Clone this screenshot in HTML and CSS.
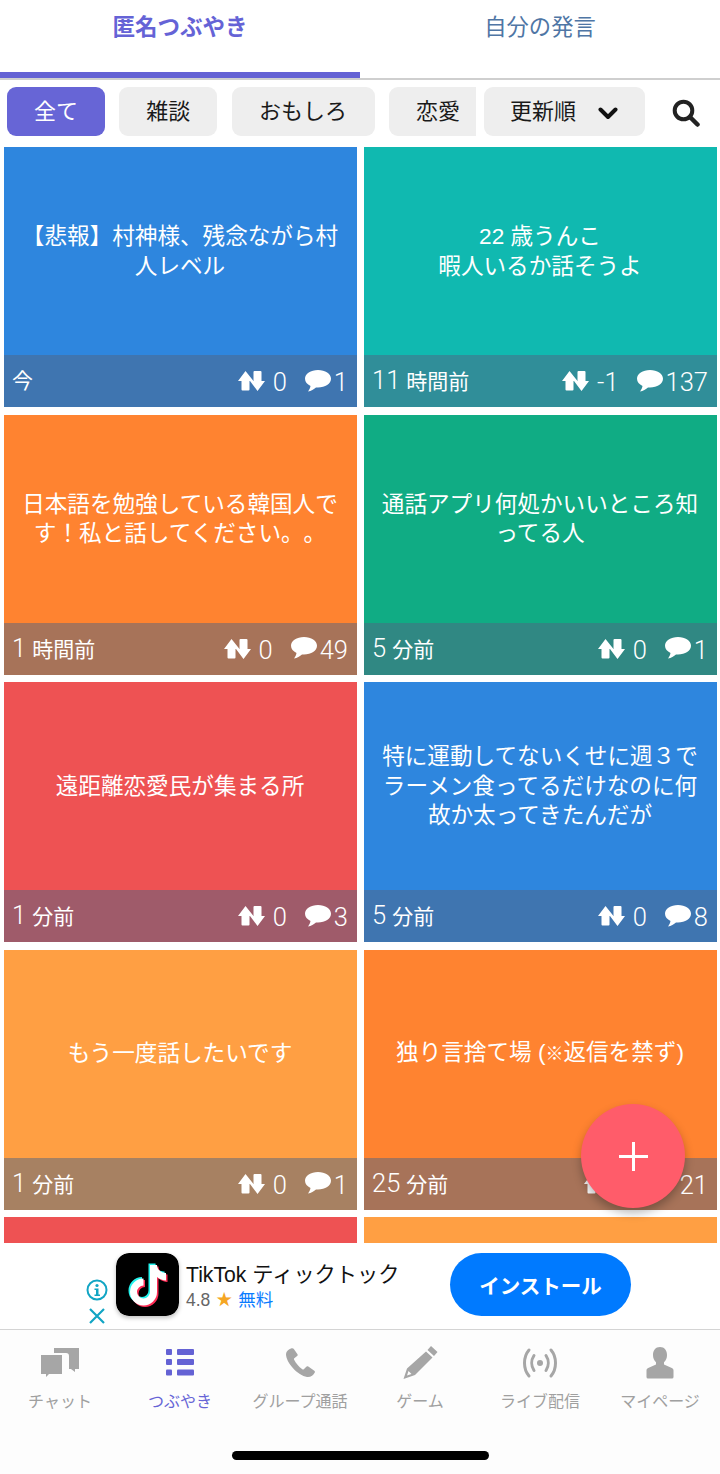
FILE: index.html
```html
<!DOCTYPE html>
<html lang="ja">
<head>
<meta charset="utf-8">
<title>匿名つぶやき</title>
<link rel="stylesheet" href="styles.css">
</head>
<body>
<svg class="defs" aria-hidden="true">
  <symbol id="vote" viewBox="0 0 27 20"><path d="M7.500 0 15.500 10h-4v8.500a1 1 0 0 1-1 1h-6a1 1 0 0 1-1-1V10H0z"/><path d="M16.500 0h6a1 1 0 0 1 1 1v9H27L19.500 20 12 10h3.500V1a1 1 0 0 1 1-1z"/></symbol>
  <symbol id="bubble" viewBox="0 0 26 23"><path d="M13 0C5.800 0 0 3.900 0 8.800c0 3 2.200 5.600 5.500 7.200-.3 2-1.300 4-2.500 5.500 3-.5 6-2.100 8-4 .7.100 1.300.1 2 .1 7.200 0 13-3.900 13-8.800S20.200 0 13 0z"/></symbol>
</svg>
<div class="page">
  <header class="tabs">
    <div class="tab tab-active">匿名つぶやき</div>
    <div class="tab">自分の発言</div>
  </header>
  <section class="filters">
    <div class="chips">
      <span class="chip chip-active">全て</span>
      <span class="chip">雑談</span>
      <span class="chip chip-wide">おもしろ</span>
      <span class="chip">恋愛</span>
    </div>
    <div class="sort">更新順
      <svg class="chev" viewBox="0 0 20 14"><path d="M2.500 3.500 10 11l7.500-7.500" fill="none" stroke="#111" stroke-width="4" stroke-linecap="round" stroke-linejoin="round"/></svg>
    </div>
    <svg class="search" viewBox="0 0 28 28"><circle cx="11.500" cy="11.500" r="8.800" fill="none" stroke="#222" stroke-width="4"/><path d="m18 18 7.500 7.500" stroke="#222" stroke-width="4.500" stroke-linecap="round"/></svg>
  </section>
  <main class="grid">
    <article class="card blue"><p class="msg">【悲報】村神様、残念ながら村人レベル</p><div class="meta"><span class="time">今</span><span class="stats"><svg class="ic-vote"><use href="#vote"/></svg><span class="num">0</span><svg class="ic-bubble"><use href="#bubble"/></svg><span class="num">1</span></span></div></article>
    <article class="card teal"><p class="msg">22 歳うんこ<br>暇人いるか話そうよ</p><div class="meta"><span class="time"><span class="num d">11</span>時間前</span><span class="stats"><svg class="ic-vote"><use href="#vote"/></svg><span class="num">-1</span><svg class="ic-bubble"><use href="#bubble"/></svg><span class="num">137</span></span></div></article>
    <article class="card orange"><p class="msg">日本語を勉強している韓国人です！私と話してください。。</p><div class="meta"><span class="time"><span class="num d">1</span>時間前</span><span class="stats"><svg class="ic-vote"><use href="#vote"/></svg><span class="num">0</span><svg class="ic-bubble"><use href="#bubble"/></svg><span class="num">49</span></span></div></article>
    <article class="card green"><p class="msg">通話アプリ何処かいいところ知ってる人</p><div class="meta"><span class="time"><span class="num d">5</span>分前</span><span class="stats"><svg class="ic-vote"><use href="#vote"/></svg><span class="num">0</span><svg class="ic-bubble"><use href="#bubble"/></svg><span class="num">1</span></span></div></article>
    <article class="card red"><p class="msg">遠距離恋愛民が集まる所</p><div class="meta"><span class="time"><span class="num d">1</span>分前</span><span class="stats"><svg class="ic-vote"><use href="#vote"/></svg><span class="num">0</span><svg class="ic-bubble"><use href="#bubble"/></svg><span class="num">3</span></span></div></article>
    <article class="card blue"><p class="msg">特に運動してないくせに週３でラーメン食ってるだけなのに何故か太ってきたんだが</p><div class="meta"><span class="time"><span class="num d">5</span>分前</span><span class="stats"><svg class="ic-vote"><use href="#vote"/></svg><span class="num">0</span><svg class="ic-bubble"><use href="#bubble"/></svg><span class="num">8</span></span></div></article>
    <article class="card amber"><p class="msg">もう一度話したいです</p><div class="meta"><span class="time"><span class="num d">1</span>分前</span><span class="stats"><svg class="ic-vote"><use href="#vote"/></svg><span class="num">0</span><svg class="ic-bubble"><use href="#bubble"/></svg><span class="num">1</span></span></div></article>
    <article class="card orange"><p class="msg">独り言捨て場 (<span class="small">※</span>返信を禁ず)</p><div class="meta"><span class="time"><span class="num d">25</span>分前</span><span class="stats"><svg class="ic-vote"><use href="#vote"/></svg><span class="num">0</span><svg class="ic-bubble"><use href="#bubble"/></svg><span class="num">21</span></span></div></article>
    <article class="card red"></article>
    <article class="card amber"></article>
  </main>
  <aside class="ad">
    <div class="ad-controls">
      <svg class="ad-info" viewBox="0 0 22 22"><circle cx="11" cy="11" r="9.500" fill="none" stroke="#12a5c4" stroke-width="2"/><circle cx="11" cy="6.500" r="1.600" fill="#12a5c4"/><path d="M8.500 9.500H12.500V15.500H14V17H8.500V15.500H10V11H8.500z" fill="#12a5c4"/></svg>
      <svg class="ad-close" viewBox="0 0 18 18"><path d="m2 2 14 14M16 2 2 16" stroke="#12a5c4" stroke-width="2.200" fill="none"/></svg>
    </div>
    <svg class="app-icon" viewBox="0 0 63 63">
      <rect width="63" height="63" rx="13" fill="#000"/>
      <path d="M34 12v27a6.500 6.500 0 1 1-6.500-6.500v-7A13.500 13.500 0 1 0 41 39V24c2.500 2 6 3.500 9 3.500V20c-5 0-9-3.500-9-8z" fill="#25f4ee" transform="translate(-1.500 -1.500)"/>
      <path d="M34 12v27a6.500 6.500 0 1 1-6.500-6.500v-7A13.500 13.500 0 1 0 41 39V24c2.500 2 6 3.500 9 3.500V20c-5 0-9-3.500-9-8z" fill="#fe2c55" transform="translate(1.500 1.500)"/>
      <path d="M34 12v27a6.500 6.500 0 1 1-6.500-6.500v-7A13.500 13.500 0 1 0 41 39V24c2.500 2 6 3.500 9 3.500V20c-5 0-9-3.500-9-8z" fill="#fff"/>
    </svg>
    <div class="ad-text">
      <div class="ad-title">TikTok ティックトック</div>
      <div class="ad-sub"><span class="rating">4.8</span><span class="star">★</span><span class="free">無料</span></div>
    </div>
    <button class="install">インストール</button>
  </aside>
  <nav class="nav">
    <div class="nav-row">
      <div class="nav-item">
        <svg class="nav-ic" viewBox="0 0 40 34"><path d="M14 2h25v21h-4v3l-4-3h-2V10a3 3 0 0 0-3-3H14z" fill="#a6a6a6"/><path d="M1 9h21v19H9l-3 3v-3H1z" fill="#a6a6a6"/></svg>
        <span>チャット</span>
      </div>
      <div class="nav-item nav-active">
        <svg class="nav-ic" viewBox="0 0 40 34"><g fill="#6462d4"><rect x="6" y="3" width="6" height="6" rx="1"/><rect x="17" y="3" width="17" height="6" rx="1"/><rect x="6" y="13" width="6" height="6" rx="1"/><rect x="17" y="13" width="17" height="6" rx="1"/><rect x="6" y="23.500" width="6" height="6" rx="1"/><rect x="17" y="23.500" width="17" height="6" rx="1"/></g></svg>
        <span>つぶやき</span>
      </div>
      <div class="nav-item">
        <svg class="nav-ic" viewBox="0 0 40 34"><path d="M11 2.500c-2.200.8-4.800 2.600-5 5.500 0 9 12 21.500 21 23 3.500.5 6.500-2 7.800-4.500.3-.8.200-1.300-.5-1.800l-6-4.200c-.8-.5-1.500-.4-2 .2l-2.500 2.500c-.4.400-1 .4-1.500.1-3.500-2.500-6.500-6-8.300-9.700-.2-.5-.1-1 .3-1.300l2.800-2.200c.6-.5.700-1.200.4-1.900L14 3.300c-.5-1-1.800-1.200-3-.8z" fill="#a6a6a6"/></svg>
        <span>グループ通話</span>
      </div>
      <div class="nav-item">
        <svg class="nav-ic" viewBox="0 0 40 34"><path d="M31 0l6.500 6L34 10l-6.500-6zM26 5.500l6.500 6L15 29 3.500 33 7 22.500zM8.500 25l-1.500 4.500 4.500-1.500z" fill="#a6a6a6" fill-rule="evenodd"/></svg>
        <span>ゲーム</span>
      </div>
      <div class="nav-item">
        <svg class="nav-ic" viewBox="0 0 40 34"><g fill="none" stroke="#a6a6a6" stroke-width="3" stroke-linecap="round"><path d="M9 4c-6 7-6 19 0 26"/><path d="M31 4c6 7 6 19 0 26"/><path d="M14 9.500c-3 4.500-3 10.500 0 15"/><path d="M26 9.500c3 4.500 3 10.500 0 15"/></g><circle cx="20" cy="17" r="3" fill="#a6a6a6"/></svg>
        <span>ライブ配信</span>
      </div>
      <div class="nav-item">
        <svg class="nav-ic" viewBox="0 0 40 34"><path d="M20 1c4.500 0 7 3.500 7 8 0 3-1 5.500-3 7.300v2.200l7.800 3.500c1.200.6 1.700 1.300 1.700 2.500V31a1.500 1.500 0 0 1-1.500 1.500H8A1.500 1.500 0 0 1 6.500 31v-6.500c0-1.200.5-1.900 1.700-2.500l7.800-3.500v-2.200c-2-1.800-3-4.300-3-7.300 0-4.500 2.500-8 7-8z" fill="#a6a6a6"/></svg>
        <span>マイページ</span>
      </div>
    </div>
    <div class="home-bar"></div>
  </nav>
  <button class="fab" aria-label="投稿"><span class="plus"></span></button>
</div>
</body>
</html>
```
FILE: styles.css
```css
* { box-sizing: border-box; }
html, body { margin: 0; padding: 0; }
body {
  font-family: "Liberation Sans", "Noto Sans CJK JP", sans-serif;
  background: #fff;
  color: #222;
}
.defs { display: none; }
.page {
  position: relative;
  width: 720px;
  height: 1474px;
  overflow: hidden;
  display: flex;
  flex-direction: column;
}

/* tabs */
.tabs {
  display: flex;
  height: 80px;
  flex: none;
  border-bottom: 2px solid #cfcfcf;
}
.tab {
  flex: 1;
  height: 78px;
  padding-top: 11px;
  text-align: center;
  font-size: 22.300px;
  line-height: 33px;
  color: #4f76a5;
}
.tab-active {
  color: #6563d6;
  font-size: 22.500px;
  font-weight: 700;
  border-bottom: 6px solid #6462d4;
}

/* filters */
.filters {
  flex: none;
  height: 67px;
  padding: 7px 0 0 7px;
  display: flex;
  align-items: flex-start;
}
.chips {
  width: 469px;
  flex: none;
  display: flex;
  gap: 14.300px;
  overflow: hidden;
}
.chip {
  flex: none;
  width: 98px;
  height: 49px;
  border-radius: 9px;
  background: #eeeeee;
  color: #1a1a1a;
  font-size: 22px;
  line-height: 49px;
  text-align: center;
}
.chip-wide { width: 143px; }
.chip-active { background: #6765d6; color: #fff; }
.sort {
  flex: none;
  width: 161px;
  height: 49px;
  margin-left: 8px;
  padding: 0 27px 0 26px;
  border-radius: 9px;
  background: #eeeeee;
  color: #1a1a1a;
  font-size: 22px;
  line-height: 49px;
  display: flex;
  justify-content: space-between;
  align-items: center;
}
.chev { width: 20px; height: 14px; margin-top: 3px; }
.search { flex: none; width: 28px; height: 28px; margin: 12px 0 0 27px; }

/* grid */
.grid {
  flex: 1;
  min-height: 0;
  overflow: hidden;
  padding: 0 3.500px;
  display: grid;
  grid-template-columns: 353px 353px;
  grid-auto-rows: 260px;
  column-gap: 7px;
  row-gap: 7.500px;
  align-content: start;
}
.card {
  display: flex;
  flex-direction: column;
  color: #fff;
}
.blue { background: #2e86de; }
.teal { background: #10b9b0; }
.orange { background: #ff8330; }
.green { background: #10ac84; }
.red { background: #ee5253; }
.amber { background: #ff9f43; }
.msg {
  flex: 1;
  margin: 0;
  padding: 1px 16px 0;
  display: block;
  align-content: center;
  text-align: center;
  font-size: 22.600px;
  line-height: 29.500px;
  text-spacing-trim: space-all;
}
.small { font-size: 18px; }
.meta {
  flex: none;
  height: 52px;
  padding: 0 8.500px;
  background: rgba(80, 100, 130, 0.5);
  display: flex;
  align-items: center;
  justify-content: space-between;
  font-size: 21px;
  line-height: 28px;
}
.time { display: flex; align-items: baseline; }
.num { font-family: Roboto, "Liberation Sans", sans-serif; font-weight: 300; font-size: 25.500px; }
.d { margin-right: 6px; }
.stats { display: flex; align-items: center; }
.stats .num { margin-top: 2px; }
.ic-vote { width: 27px; height: 20px; fill: #fff; margin-right: 8px; }
.ic-bubble { width: 26px; height: 23px; fill: #fff; margin: 0 3px 0 18px; }

/* ad */
.ad {
  flex: none;
  height: 87px;
  display: flex;
  align-items: flex-start;
  background: #fff;
  border-bottom: 1.500px solid #d4d4d4;
  padding: 10px 0 0 86px;
}
.ad-controls {
  flex: none;
  width: 22px;
  margin-top: 26px;
  display: flex;
  flex-direction: column;
  align-items: center;
  gap: 6px;
}
.ad-info { width: 22px; height: 22px; }
.ad-close { width: 18px; height: 18px; }
.app-icon {
  flex: none;
  width: 63px;
  height: 63px;
  margin-left: 8px;
  border-radius: 13px;
  box-shadow: 0 2px 4px rgba(0, 0, 0, 0.25);
}
.ad-text { flex: none; width: 264px; margin-left: 7px; padding-top: 9px; }
.ad-title { font-size: 21.200px; line-height: 26px; color: #111; }
.ad-sub { display: flex; align-items: center; font-size: 17.500px; line-height: 22px; margin-top: 1px; }
.rating { color: #666; }
.star { color: #f5a623; margin: 0 6px; font-size: 16px; }
.free { color: #0a7cff; }
.install {
  flex: none;
  width: 181px;
  height: 63px;
  border: 0;
  border-radius: 32px;
  background: #007aff;
  color: #fff;
  font: 700 20.500px "Liberation Sans", "Noto Sans CJK JP", sans-serif;
}

/* nav */
.nav {
  flex: none;
  height: 144px;
  background: #fdfdfd;
  display: flex;
  flex-direction: column;
}
.nav-row { display: flex; padding-top: 16px; }
.nav-item {
  flex: 1;
  display: flex;
  flex-direction: column;
  align-items: center;
  color: #a0a0a0;
  font-size: 16px;
  line-height: 24px;
}
.nav-ic { width: 40px; height: 34px; margin-bottom: 10px; }
.nav-active { color: #6664d6; }
.home-bar {
  width: 257px;
  height: 9px;
  margin: 37px auto 0;
  border-radius: 5px;
  background: #000;
}

/* floating button */
.fab {
  position: absolute;
  left: 581px;
  top: 1104px;
  width: 104px;
  height: 104px;
  border: 0;
  border-radius: 50%;
  background: #ff5c6a;
  box-shadow: 0 5px 10px rgba(0, 0, 0, 0.28);
  display: flex;
  align-items: center;
  justify-content: center;
}
.plus { position: relative; display: block; width: 29px; height: 29px; }
.plus::before, .plus::after { content: ""; position: absolute; background: #fff; }
.plus::before { left: 0; right: 0; top: 13px; height: 3px; }
.plus::after { top: 0; bottom: 0; left: 13px; width: 3px; }
```
